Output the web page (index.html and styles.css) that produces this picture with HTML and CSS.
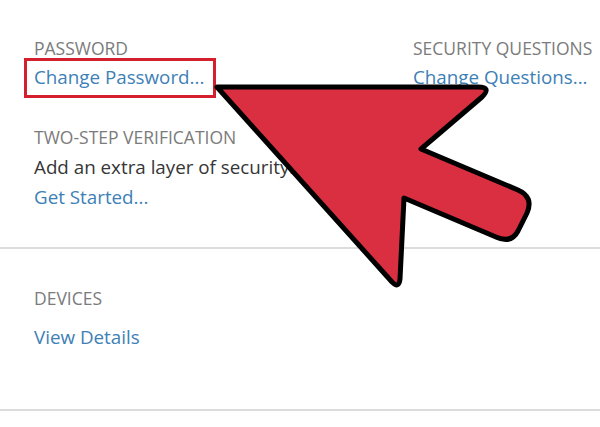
FILE: index.html
```html
<!DOCTYPE html>
<html lang="en">
<head>
<meta charset="UTF-8" />
<title>Security</title>
<link rel="stylesheet" href="styles.css">
</head>
<body>
<div class="page">
  <section class="sec top">
    <div class="col">
      <p class="label">PASSWORD</p>
      <a class="link boxed" href="#">Change Password...</a>
      <p class="label gap">TWO-STEP VERIFICATION</p>
      <p class="text">Add an extra layer of security.</p>
      <a class="link started" href="#">Get Started...</a>
    </div>
    <div class="col">
      <p class="label">SECURITY QUESTIONS</p>
      <a class="link" href="#">Change Questions...</a>
    </div>
  </section>

  <section class="sec devices">
    <p class="label">DEVICES</p>
    <a class="link details" href="#">View Details</a>
  </section>

  <!-- arrow drawn over the page -->
  <svg class="arrow" width="600" height="427" viewBox="0 0 600 427">
    <path d="M217,87 L478,87 Q492,87 482,97 L421,149 L518,190 Q534,197 527,213 L518,231 Q511,244 496,237 L404,198 L400,279 Q399,289 392,282 Z"
      fill="#d92f40" stroke="#000" stroke-width="5" stroke-linejoin="round" />
  </svg>
</div>
</body>
</html>
```

FILE: styles.css
```css
body {
  margin: 0;
  background: #fff;
  font-family: "Open Sans", "Liberation Sans", sans-serif;
}
.page {
  position: relative;
  width: 600px;
  height: 427px;
  overflow: hidden;
}
p { margin: 0; }
.sec {
  padding-left: 34px;
  border-bottom: 2px solid #dcdcdc;
}
.top {
  display: grid;
  grid-template-columns: 379px 1fr;
  padding-top: 38px;
  padding-bottom: 38px;
}
.col {
  display: flex;
  flex-direction: column;
  align-items: flex-start;
}
.label {
  font-size: 17.5px;
  line-height: 20px;
  color: #7b7b7b;
}
.link {
  display: inline-block;
  margin-top: 7px;
  font-size: 18.8px;
  line-height: 24px;
  color: #3d80b6;
  text-decoration: none;
}
.boxed {
  border: 3px solid #d4202c;
  padding: 4px 9px 6px 7px;
  margin: 0 -12px -9px -10px;
}
.gap { margin-top: 38px; }
.text {
  margin-top: 8px;
  font-size: 18.8px;
  line-height: 24px;
  color: #363636;
}
.started { margin-top: 6px; }
.devices {
  padding-top: 39px;
  padding-bottom: 60px;
}
.details { margin-top: 17px; }
.arrow {
  position: absolute;
  top: 0;
  left: 0;
}
```
